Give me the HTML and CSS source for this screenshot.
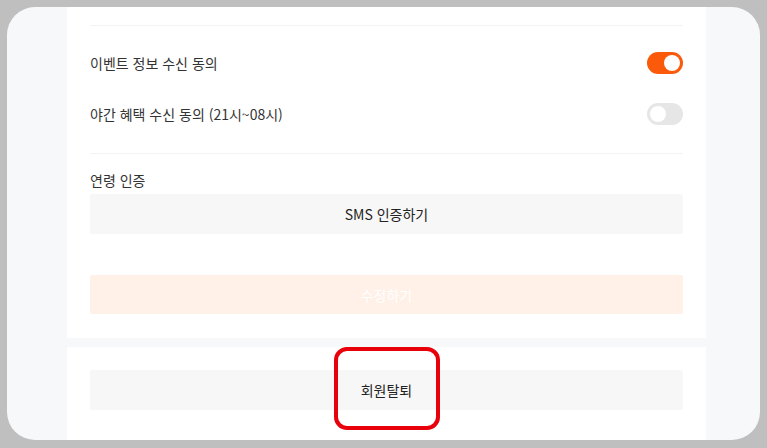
FILE: index.html
```html
<!DOCTYPE html>
<html lang="ko">
<head>
	<meta charset="utf-8">
	<meta name="viewport" content="width=device-width, initial-scale=1.0">
	<link rel="stylesheet" href="styles.css">
</head>
<body>
	<div class="frame">
		<div class="card card-top">
			<div class="line"></div>
			<div class="toggles">
				<div class="row">
					<span>이벤트 정보 수신 동의</span>
					<span class="toggle on"></span>
				</div>
				<div class="row">
					<span>야간 혜택 수신 동의 (21시~08시)</span>
					<span class="toggle"></span>
				</div>
			</div>
			<div class="line"></div>
			<div class="label">연령 인증</div>
			<button class="btn">SMS 인증하기</button>
			<button class="btn btn-save" disabled>수정하기</button>
		</div>
		<div class="card card-bottom">
			<button class="btn">회원탈퇴</button>
		</div>
	</div>
	<div class="mark"></div>
</body>
</html>
```

FILE: styles.css
```css
body {
	margin: 0;
	height: 448px;
	background: #bfbfbf;
	font-family: "Noto Sans CJK KR", "Noto Sans", sans-serif;
	color: #333;
	position: relative;
	overflow: hidden;
}
.frame {
	margin: 7px 7px 0 7px;
	height: 433px;
	background: #f7f8fa;
	border-radius: 28px;
	overflow: hidden;
}
.card {
	background: #fff;
	margin-left: 60px;
	width: 593px;
	padding: 0 23px;
}
.card-top {
	padding-top: 18px;
	padding-bottom: 24px;
}
.card-bottom {
	margin-top: 9px;
	padding-top: 23px;
	height: 100px;
}
.line {
	height: 1px;
	background: #f3f3f3;
}
.toggles {
	padding: 11px 0 14px;
}
.row {
	display: flex;
	align-items: center;
	justify-content: space-between;
	height: 51px;
	font-size: 14px;
}
.toggle {
	position: relative;
	width: 36px;
	height: 22px;
	border-radius: 11px;
	background: #e6e6e6;
}
.toggle::after {
	content: "";
	position: absolute;
	top: 3px;
	left: 3px;
	width: 16px;
	height: 16px;
	border-radius: 50%;
	background: #fff;
}
.toggle.on {
	background: #fa5a0a;
}
.toggle.on::after {
	left: 17px;
}
.label {
	margin-top: 16px;
	font-size: 14px;
	line-height: 20px;
}
.btn {
	display: block;
	width: 100%;
	height: 40px;
	margin-top: 4px;
	border: 0;
	border-radius: 2px;
	background: #f7f7f7;
	font-family: inherit;
	font-size: 14px;
	color: #222;
}
.btn-save {
	margin-top: 41px;
	height: 39px;
	background: #fff1e8;
	color: #fff;
}
.card-bottom .btn {
	margin-top: 0;
}
.mark {
	position: absolute;
	left: 334px;
	top: 347px;
	width: 98px;
	height: 75px;
	border: 4px solid #e8000b;
	border-radius: 13px;
}
```
